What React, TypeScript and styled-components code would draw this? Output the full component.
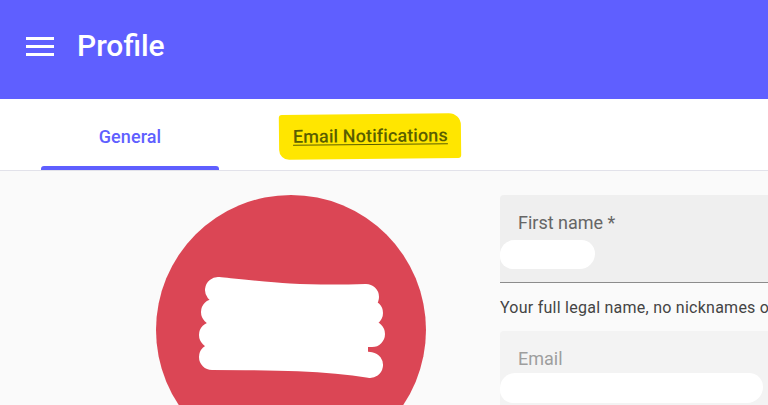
import React from 'react';
import styled, { createGlobalStyle } from 'styled-components';

const GlobalStyle = createGlobalStyle`
  html, body {
    margin: 0;
    padding: 0;
    background: #fafafa;
    font-family: Roboto, "Liberation Sans", Arial, sans-serif;
    overflow: hidden;
  }
`;

const Page = styled.div`
  width: 768px;
  height: 405px;
  overflow: hidden;
  display: flex;
  flex-direction: column;
  background: #fafafa;
`;

const AppBar = styled.header`
  height: 99px;
  box-sizing: border-box;
  flex-shrink: 0;
  background: #5f5fff;
  display: flex;
  align-items: center;
  padding: 0 0 8px 22px;
  gap: 19px;
  color: #fff;
`;

const MenuButton = styled.button`
  width: 36px;
  height: 36px;
  padding: 0;
  border: none;
  background: transparent;
  color: inherit;
  display: flex;
  align-items: center;
  justify-content: center;
`;

const Title = styled.h1`
  margin: 0;
  font-size: 30px;
  font-weight: 500;
  letter-spacing: 0;
  line-height: 1;
`;

const TabBar = styled.nav`
  height: 71px;
  flex-shrink: 0;
  background: #fff;
  border-bottom: 1px solid #e2e2ea;
  display: flex;
  padding-left: 41px;
  gap: 62px;
`;

const Tab = styled.div<{ $active?: boolean }>`
  position: relative;
  width: 178px;
  display: flex;
  align-items: center;
  justify-content: center;
  padding-top: 4px;
  font-size: 18px;
  font-weight: 500;
  letter-spacing: 0.1px;
  white-space: nowrap;
  color: ${p => (p.$active ? '#5f5fff' : '#666')};

  ${p =>
    p.$active &&
    `
    &::after {
      content: '';
      position: absolute;
      left: 0;
      right: 0;
      bottom: 0;
      height: 4px;
      border-radius: 3px 3px 0 0;
      background: #5f5fff;
    }
  `}
`;

const Highlight = styled.span`
  flex-shrink: 0;
  white-space: nowrap;
  background: #ffe600;
  color: #5a5e00;
  text-decoration: underline;
  text-decoration-thickness: 1px;
  text-underline-offset: 2px;
  padding: 11px 13px 13px 14px;
  border-radius: 3px 12px 3px 10px;
  transform: rotate(-0.6deg);
`;

const Content = styled.main`
  flex: 1;
  display: flex;
  padding: 24px 0 0 156px;
  gap: 74px;
`;

const Avatar = styled.div`
  width: 270px;
  height: 270px;
  flex-shrink: 0;
  border-radius: 50%;
  background: #db4655;
`;

const Form = styled.div`
  display: flex;
  flex-direction: column;
  width: 300px;
  flex-shrink: 0;
`;

const Field = styled.div<{ $disabled?: boolean }>`
  height: 88px;
  box-sizing: border-box;
  background: ${p => (p.$disabled ? '#f3f3f3' : '#efefef')};
  border-radius: 4px 4px 0 0;
  border-bottom: 1px solid ${p => (p.$disabled ? 'transparent' : '#8c8c8c')};
  padding: 17px 0 0 18px;
`;

const Label = styled.div<{ $disabled?: boolean }>`
  font-size: 18px;
  line-height: 22px;
  color: ${p => (p.$disabled ? '#9e9e9e' : '#666')};
`;

const Value = styled.div<{ $width: number; $top: number; $height: number }>`
  width: ${p => p.$width}px;
  height: ${p => p.$height}px;
  margin: ${p => p.$top}px 0 0 -18px;
  background: #fff;
  border-radius: 15px 14px 16px 13px;
`;

const Helper = styled.div`
  font-size: 16px;
  letter-spacing: 0.25px;
  color: #444;
  white-space: nowrap;
  padding: 15px 0 13px;
  line-height: 20px;
`;

const MenuIcon = () => (
  <svg width="36" height="36" viewBox="0 0 36 36" fill="#fff">
    <rect x="4" y="9" width="28" height="3" />
    <rect x="4" y="17" width="28" height="3" />
    <rect x="4" y="25" width="28" height="3" />
  </svg>
);

const Scribble = () => (
  <svg width="270" height="270" viewBox="0 0 270 270">
    <g stroke="#fff" strokeWidth="26" strokeLinecap="round" fill="none">
      <path d="M62 95 C 110 100, 140 104, 210 102" />
      <line x1="58" y1="117" x2="214" y2="118" />
      <line x1="56" y1="140" x2="216" y2="139" />
      <path d="M56 162 C 120 162, 170 163, 214 170" />
    </g>
    <rect x="62" y="95" width="150" height="70" fill="#fff" />
  </svg>
);

export default function App() {
  return (
    <>
      <GlobalStyle />
      <Page>
        <AppBar>
          <MenuButton aria-label="menu">
            <MenuIcon />
          </MenuButton>
          <Title>Profile</Title>
        </AppBar>
        <TabBar>
          <Tab $active>General</Tab>
          <Tab>
            <Highlight>Email Notifications</Highlight>
          </Tab>
        </TabBar>
        <Content>
          <Avatar>
            <Scribble />
          </Avatar>
          <Form>
            <Field>
              <Label>First name *</Label>
              <Value $width={95} $top={6} $height={29} />
            </Field>
            <Helper>Your full legal name, no nicknames or initials</Helper>
            <Field $disabled>
              <Label $disabled>Email</Label>
              <Value $width={263} $top={3} $height={30} />
            </Field>
          </Form>
        </Content>
      </Page>
    </>
  );
}
